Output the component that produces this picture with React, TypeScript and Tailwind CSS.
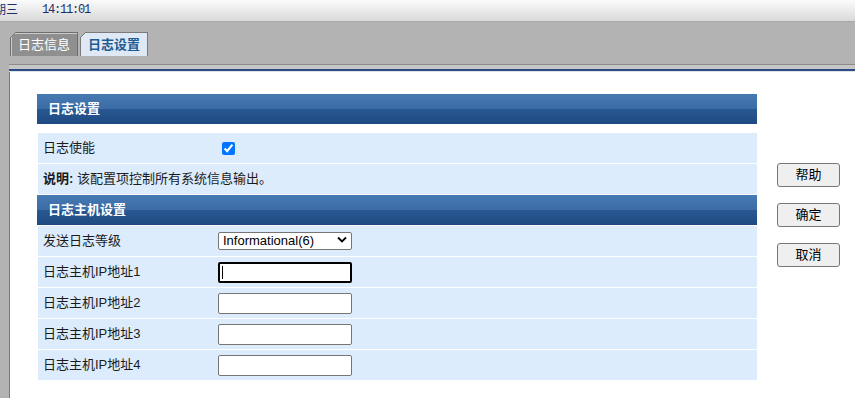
import React from 'react';

const cn = '"Liberation Sans", "Noto Sans CJK SC", sans-serif';

const Tab = ({ label, active }: { label: string; active?: boolean }) => (
  <div
    className={`relative flex h-[24px] w-[68px] items-center justify-center border border-b-0 text-[13px] ${
      active
        ? 'border-[#7a7a7a] bg-[#dfe9f5] font-semibold text-[#1d5b93]'
        : 'border-[#6e6e6e] bg-[#8f8f8f] text-white shadow-[inset_1px_1px_0_rgba(255,255,255,0.55)]'
    }`}
  >
    <svg className="absolute -left-px -top-px" width="6" height="6" viewBox="0 0 6 6">
      <polygon points="0,0 6,0 0,6" fill="#b3b3b3" />
      <line x1="0" y1="6" x2="6" y2="0" stroke="#7a7a7a" strokeWidth="1" />
    </svg>
    {label}
  </div>
);

const Header = ({ title }: { title: string }) => (
  <div className="flex h-[30px] items-center bg-[linear-gradient(#4779b2,#3b6ca6_50%,#295892_50%,#1f4a81)] pl-[11px] text-[13px] font-bold text-white">
    {title}
  </div>
);

const Row = ({ label, children }: { label: React.ReactNode; children?: React.ReactNode }) => (
  <div className="flex h-[30px] items-center bg-[#ddecfc] text-[13px] text-[#1b1b1b]">
    <div className="w-[180px] pl-[5px]">{label}</div>
    <div className="flex items-center">{children}</div>
  </div>
);

const TextBox = ({ focused }: { focused?: boolean }) => (
  <div className="relative">
    <input
      type="text"
      className={`h-[21px] w-[134px] rounded-[2px] bg-white px-[2px] outline-none ${
        focused ? 'border-2 border-black' : 'border border-[#767676]'
      }`}
    />
    {focused && <span className="absolute left-[4px] top-[4px] h-[13px] w-px bg-black" />}
  </div>
);

const Btn = ({ label }: { label: string }) => (
  <button className="h-[24px] w-[63px] rounded-[3px] border border-[#767676] bg-[#efefef] text-[13px] text-black">
    {label}
  </button>
);

export default function App() {
  return (
    <div className="flex h-screen flex-col overflow-hidden bg-[#b3b3b3]" style={{ fontFamily: cn }}>
      <div className="flex h-[22px] shrink-0 items-center border-b border-[#a9a9a9] bg-[linear-gradient(#fbfbfb,#d9d9d9)] pb-[2px] text-[12px] text-[#1c2f6a]">
        <span className="ml-[-18px]">星期三</span>
        <span
          className="ml-[24px] text-[12px] tracking-[-1.2px]"
          style={{ fontFamily: '"Liberation Mono", monospace' }}
        >
          14:11:01
        </span>
      </div>

      <div className="flex shrink-0 gap-[2px] pl-[10px] pt-[10px]">
        <Tab label="日志信息" />
        <Tab label="日志设置" active />
      </div>

      <div className="ml-[9px] mt-[8px] flex flex-1 flex-col border-t border-[#8a8a8a]">
        <div className="h-[4px] bg-[#c6c6c6]" />
        <div className="h-[2px] bg-[#2b4a86]" />
        <div className="h-px bg-[#dfe3ea]" />
        <div className="flex flex-1 gap-[20px] border-l border-[#7a7a7a] bg-white pl-[27px] pt-[22px]">
          <div className="flex w-[720px] flex-col">
            <Header title="日志设置" />
            <div className="mt-[9px] flex flex-col gap-px pl-px">
              <Row label="日志使能">
                <input type="checkbox" checked readOnly className="ml-[4px] h-[13px] w-[13px] accent-[#0075ff]" />
              </Row>
              <Row
                label={
                  <span className="whitespace-nowrap">
                    <b>说明:</b> 该配置项控制所有系统信息输出。
                  </span>
                }
              />
            </div>
            <div className="mt-px flex flex-col gap-px">
              <Header title="日志主机设置" />
              <div className="flex flex-col gap-px pl-px">
                <Row label="发送日志等级">
                  <div className="relative">
                    <select className="h-[18px] w-[134px] appearance-none rounded-[2px] border border-[#767676] bg-white pl-[4px] text-[13px] leading-[16px] text-black outline-none">
                      <option>Informational(6)</option>
                    </select>
                    <svg className="pointer-events-none absolute right-[5px] top-[5px]" width="10" height="7" viewBox="0 0 10 7">
                      <path d="M1 1.5 L5 5.5 L9 1.5" fill="none" stroke="#000" strokeWidth="1.8" />
                    </svg>
                  </div>
                </Row>
                <Row label="日志主机IP地址1">
                  <TextBox focused />
                </Row>
                <Row label="日志主机IP地址2">
                  <TextBox />
                </Row>
                <Row label="日志主机IP地址3">
                  <TextBox />
                </Row>
                <Row label="日志主机IP地址4">
                  <TextBox />
                </Row>
              </div>
            </div>
          </div>
          <div className="flex flex-col gap-[16px] pt-[69px]">
            <Btn label="帮助" />
            <Btn label="确定" />
            <Btn label="取消" />
          </div>
        </div>
      </div>
    </div>
  );
}
